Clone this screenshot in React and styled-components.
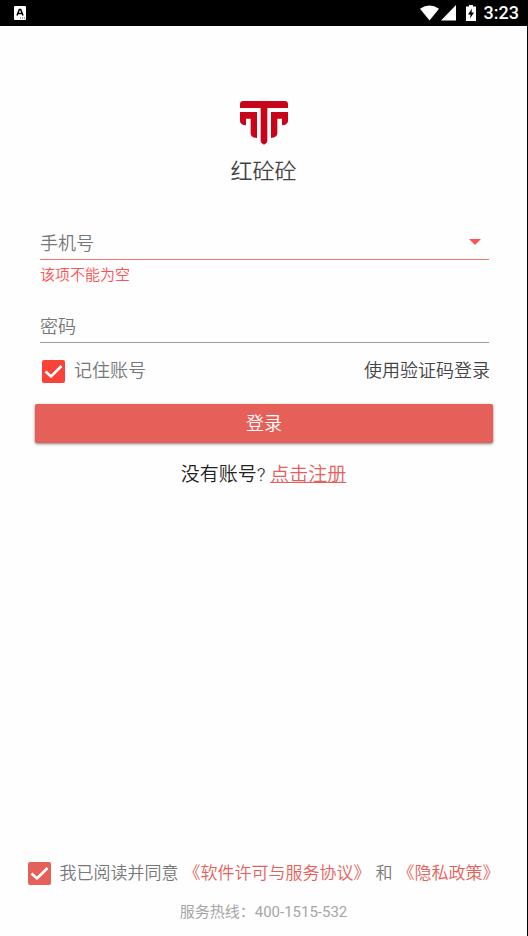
import React, { useState } from "react";
import styled, { createGlobalStyle } from "styled-components";

const color = {
  page: "#fefefe",
  brand: "#e6605a",
  error: "#ff5252",
  text: "#444444",
  muted: "#777777",
  faint: "#a6a6a6",
};

const GlobalStyle = createGlobalStyle`
  *, *::before, *::after { box-sizing: border-box; }
  body {
    margin: 0;
    background: ${color.page};
    font-family: Roboto, "Noto Sans CJK SC", sans-serif;
    font-weight: 350;
  }
  button, input { font: inherit; }
`;

const Screen = styled.div`
  min-height: 100vh;
  display: flex;
  flex-direction: column;
  border-right: 1px solid #000;
  background: ${color.page};
`;

const StatusBar = styled.header`
  height: 26px;
  padding: 0 8px 0 14px;
  display: flex;
  align-items: center;
  justify-content: space-between;
  background: #000;
  color: #fff;
`;

const StatusIcons = styled.div`
  display: flex;
  align-items: center;
`;

const BatteryIcon = styled.svg`
  margin: 0 8px 0 9px;
`;

const Clock = styled.time`
  font-size: 18px;
  line-height: 26px;
  font-weight: 500;
`;

const Brand = styled.div`
  margin-top: 75px;
  display: flex;
  flex-direction: column;
  align-items: center;
`;

const AppName = styled.h1`
  margin: 11px 0 0;
  font-size: 22px;
  line-height: 32px;
  font-weight: 350;
  color: ${color.text};
`;

const Form = styled.form`
  margin: 35px 34px 0 35px;
  display: flex;
  flex-direction: column;
`;

const Field = styled.div`
  height: 37px;
  margin: 0 4px 0 5px;
  display: flex;
  align-items: center;
  border-bottom: 1px solid ${(p) => (p.$invalid ? "#f57670" : "#9c9c9c")};
`;

const TextInput = styled.input`
  flex: 1;
  min-width: 0;
  height: 36px;
  padding: 4px 0 0;
  border: 0;
  outline: 0;
  background: transparent;
  font-size: 18px;
  color: ${color.text};

  &::placeholder {
    color: ${color.muted};
    opacity: 1;
  }
`;

const DropButton = styled.button`
  width: 28px;
  height: 26px;
  padding: 2px 0 0;
  border: 0;
  background: transparent;
  display: grid;
  place-items: center;
`;

const ErrorText = styled.p`
  height: 46px;
  margin: 0 5px;
  padding-top: 3px;
  font-size: 15px;
  line-height: 24px;
  color: ${color.error};
`;

const OptionsRow = styled.div`
  margin: 14px 3px 0 7px;
  display: flex;
  align-items: center;
  justify-content: space-between;
  font-size: 18px;
  line-height: 28px;
`;

const CheckLabel = styled.label`
  display: flex;
  align-items: center;
  gap: 9px;
  color: ${color.muted};
`;

const CheckBox = styled.input`
  appearance: none;
  flex: none;
  width: 23px;
  height: 23px;
  margin: 0;
  border: 2px solid ${(p) => p.$tone};
  border-radius: 2px;

  &:checked {
    background: ${(p) => p.$tone}
      url("data:image/svg+xml,%3Csvg xmlns='http://www.w3.org/2000/svg' viewBox='0 0 23 23'%3E%3Cpath d='M3.5 11.5 9 16.5 19.5 6' fill='none' stroke='white' stroke-width='2.6'/%3E%3C/svg%3E")
      center / 23px 23px no-repeat border-box;
  }
`;

const PlainLink = styled.a`
  color: ${color.text};
  text-decoration: none;
`;

const LoginButton = styled.button`
  height: 39px;
  margin-top: 19px;
  padding: 0 0 3px;
  border: 0;
  border-radius: 2px;
  background: ${color.brand};
  box-shadow: 0 1px 3px rgba(0, 0, 0, 0.5);
  color: #fff;
  font-size: 18px;
`;

const Register = styled.p`
  margin: 18px 0 0;
  text-align: center;
  font-size: 19px;
  line-height: 28px;
  color: #222;
`;

const RegisterLink = styled.a`
  color: ${color.brand};
  text-decoration: underline;
  text-decoration-thickness: 1px;
  text-underline-offset: 1px;
`;

const Footer = styled.footer`
  margin-top: auto;
  padding-bottom: 12px;
  display: flex;
  flex-direction: column;
  align-items: center;
`;

const Agreement = styled.div`
  display: flex;
  align-items: center;
  gap: 5px;
  font-size: 17px;
  line-height: 28px;
  color: ${color.muted};
`;

const AgreementLink = styled.a`
  color: ${color.brand};
  text-decoration: none;
`;

const Hotline = styled.p`
  margin: 13px 0 0;
  font-size: 15px;
  line-height: 24px;
  font-weight: 400;
  color: ${color.faint};
`;

function Logo() {
  return (
    <svg width="48" height="44" viewBox="0 0 144 132" fill="#c7051b" role="img" aria-label="红砼砼">
      <path d="M10 0H134Q144 0 144 10V21H82V121Q82 126 72 131Q62 126 62 121V21H0V10Q0 0 10 0Z" />
      <path d="M0 33H51V111Q34 110 32 99V53H18V73Q2 73 0 61Z" />
      <path d="M144 33H93V111Q110 110 112 99V53H126V73Q142 73 144 61Z" />
    </svg>
  );
}

function NoticeIcon() {
  return (
    <svg width="12" height="14" viewBox="0 0 12 14" aria-hidden="true">
      <rect width="12" height="14" rx="1" fill="#fff" />
      <path d="M3 9.5 5.3 3.5H6.7L9 9.5M4.2 7.5H7.8" fill="none" stroke="#000" strokeWidth="1.5" />
      <path d="M6 12H11" stroke="#555" strokeDasharray="1 1" />
    </svg>
  );
}

function SignalIcons() {
  return (
    <svg width="37" height="16" viewBox="0 0 37 16" fill="#fff" aria-hidden="true">
      <path d="M0 3.8Q9.5-3 19 3.8L9.5 15.5Z" />
      <path d="M36 0V15.5H21Z" />
    </svg>
  );
}

export default function App() {
  const [phone, setPhone] = useState("");
  const [password, setPassword] = useState("");

  return (
    <>
      <GlobalStyle />
      <Screen>
        <StatusBar>
          <NoticeIcon />
          <StatusIcons>
            <SignalIcons />
            <BatteryIcon width="10" height="16" viewBox="0 0 10 16" aria-hidden="true">
              <path d="M3 0H7V1.5H10V16H0V1.5H3Z" fill="#fff" />
              <path d="M6 3.5 2 9.5H4.5L4 13.5 8 7.5H5.5Z" fill="#000" />
            </BatteryIcon>
            <Clock>3:23</Clock>
          </StatusIcons>
        </StatusBar>

        <Brand>
          <Logo />
          <AppName>红砼砼</AppName>
        </Brand>

        <Form onSubmit={(e) => e.preventDefault()}>
          <Field $invalid>
            <TextInput
              type="tel"
              placeholder="手机号"
              aria-label="手机号"
              aria-invalid="true"
              aria-describedby="phone-error"
              value={phone}
              onChange={(e) => setPhone(e.target.value)}
            />
            <DropButton type="button" aria-label="选择账号">
              <svg width="12" height="6" viewBox="0 0 12 6" aria-hidden="true">
                <path d="M0 0H12L6 6Z" fill={color.error} />
              </svg>
            </DropButton>
          </Field>
          <ErrorText id="phone-error">该项不能为空</ErrorText>
          <Field>
            <TextInput
              type="password"
              placeholder="密码"
              aria-label="密码"
              value={password}
              onChange={(e) => setPassword(e.target.value)}
            />
          </Field>
          <OptionsRow>
            <CheckLabel>
              <CheckBox type="checkbox" defaultChecked $tone="#f9423a" />
              记住账号
            </CheckLabel>
            <PlainLink href="#code">使用验证码登录</PlainLink>
          </OptionsRow>
          <LoginButton type="submit">登录</LoginButton>
        </Form>

        <Register>
          没有账号? <RegisterLink href="#register">点击注册</RegisterLink>
        </Register>

        <Footer>
          <Agreement>
            <CheckLabel>
              <CheckBox type="checkbox" defaultChecked $tone={color.brand} />
              我已阅读并同意
            </CheckLabel>
            <AgreementLink href="#license">《软件许可与服务协议》</AgreementLink>
            <span>和</span>
            <AgreementLink href="#privacy">《隐私政策》</AgreementLink>
          </Agreement>
          <Hotline>服务热线：400-1515-532</Hotline>
        </Footer>
      </Screen>
    </>
  );
}
